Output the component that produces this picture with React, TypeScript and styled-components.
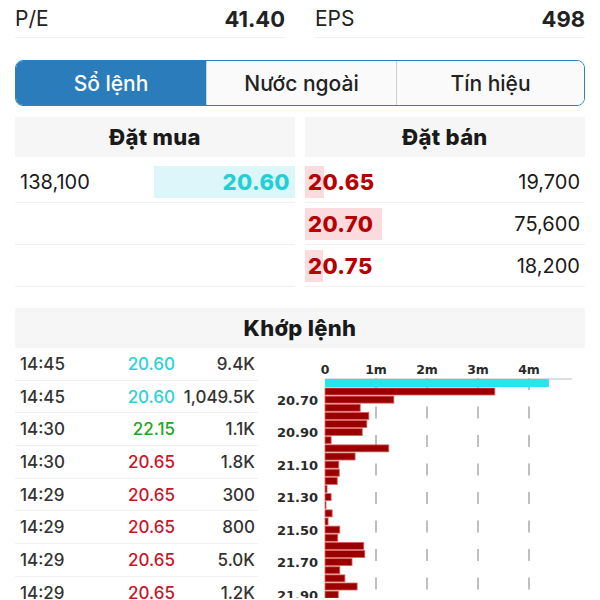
import styled, { createGlobalStyle } from 'styled-components';

const GlobalStyle = createGlobalStyle`
  html, body {
    margin: 0;
    padding: 0;
    background: #ffffff;
    overflow: hidden;
  }
  body {
    font-family: Inter, 'Noto Sans', 'DejaVu Sans', sans-serif;
    color: #222;
  }
`;

const Page = styled.div`
  width: 570px;
  height: 600px;
  padding: 0 15px;
  overflow: hidden;
`;

const StatsRow = styled.div`
  display: grid;
  grid-template-columns: 1fr 1fr;
  column-gap: 30px;
`;

const StatCell = styled.div`
  display: flex;
  justify-content: space-between;
  align-items: center;
  height: 37px;
  border-bottom: 1px solid #f0f0f0;
`;

const StatLabel = styled.span`
  font-size: 21px;
  font-weight: 400;
  color: #222;
`;

const StatValue = styled.span`
  font-size: 22px;
  font-weight: 700;
  color: #222;
`;

const Tabs = styled.div`
  display: grid;
  grid-template-columns: 190px 190px 1fr;
  margin-top: 22px;
  height: 44px;
  border: 1.5px solid #2f7fbf;
  border-radius: 8px;
  overflow: hidden;
`;

const Tab = styled.div<{ $active?: boolean }>`
  display: flex;
  align-items: center;
  justify-content: center;
  font-size: 21px;
  font-weight: 500;
  color: ${(p) => (p.$active ? '#ffffff' : '#222')};
  background: ${(p) => (p.$active ? '#2a7cbb' : '#fafafa')};
  & + & {
    border-left: 1px solid ${(p) => (p.$active ? '#2a7cbb' : '#cfcfcf')};
  }
`;

const OrderBook = styled.div`
  display: grid;
  grid-template-columns: 1fr 1fr;
  column-gap: 10px;
  margin-top: 11px;
`;

const SectionHeader = styled.div`
  display: flex;
  align-items: center;
  justify-content: center;
  height: 40px;
  background: #f6f6f6;
  font-size: 22px;
  font-weight: 800;
  letter-spacing: 0.3px;
  color: #1a1a1a;
`;

const BookRows = styled.div`
  margin-top: 4px;
`;

const BookRow = styled.div<{ $side: 'buy' | 'sell' }>`
  display: flex;
  align-items: center;
  justify-content: space-between;
  height: 41px;
  border-bottom: 1px solid #f1f1f1;
  padding: ${(p) => (p.$side === 'buy' ? '0 5px 0 5px' : '0 5px 0 3px')};
  background-repeat: no-repeat;
  background-size: 100% 32px;
  background-position: center;
`;

const BookVolume = styled.span`
  font-size: 20px;
  font-weight: 400;
  color: #1a1a1a;
`;

const BookPrice = styled.span<{ $side: 'buy' | 'sell' }>`
  font-size: 22px;
  font-weight: 800;
  letter-spacing: 0.4px;
  color: ${(p) => (p.$side === 'buy' ? '#1fd0d6' : '#b70000')};
`;

const MatchSection = styled.div`
  margin-top: 21px;
`;

const MatchBody = styled.div`
  display: flex;
  align-items: flex-start;
`;

const TradeTable = styled.div`
  width: 243px;
  flex-shrink: 0;
`;

const TradeRow = styled.div`
  display: grid;
  grid-template-columns: 100px 55px 80px;
  align-items: center;
  height: 31.7px;
  padding-left: 5px;
  border-bottom: 1px solid #efefef;
  font-size: 17px;
  font-weight: 500;
`;

const TradeTime = styled.span`
  color: #333;
`;

const TradePrice = styled.span<{ $color: string }>`
  text-align: right;
  color: ${(p) => p.$color};
`;

const TradeVolume = styled.span`
  text-align: right;
  color: #333;
`;

const ChartBox = styled.div`
  flex: 1;
  height: 250px;
  overflow: hidden;
`;

const ChartSvg = styled.svg`
  display: block;
  font-family: 'DejaVu Sans', Verdana, sans-serif;
  font-weight: 700;
`;

const colors = {
  ref: '#2ad2d8',
  up: '#23a623',
  down: '#c8162a',
};

const asks = [
  { price: '20.65', volume: '19,700', bar: 19 },
  { price: '20.70', volume: '75,600', bar: 77 },
  { price: '20.75', volume: '18,200', bar: 18 },
];

const trades = [
  { time: '14:45', price: '20.60', color: colors.ref, volume: '9.4K' },
  { time: '14:45', price: '20.60', color: colors.ref, volume: '1,049.5K' },
  { time: '14:30', price: '22.15', color: colors.up, volume: '1.1K' },
  { time: '14:30', price: '20.65', color: colors.down, volume: '1.8K' },
  { time: '14:29', price: '20.65', color: colors.down, volume: '300' },
  { time: '14:29', price: '20.65', color: colors.down, volume: '800' },
  { time: '14:29', price: '20.65', color: colors.down, volume: '5.0K' },
  { time: '14:29', price: '20.65', color: colors.down, volume: '1.2K' },
];

// volume by price in thousands, from 20.65 upward in 0.05 steps
const priceVolumes = [
  3330, 1350, 690, 860, 820, 730, 120, 1250, 590, 270, 280, 240, 40, 120, 20, 140, 60, 290, 250, 760, 780, 530,
  290, 390, 630, 260, 300,
];

const ORIGIN_X = 67;
const PER_M = 51;
const AXIS_Y = 31;
const ROW_STEP = 8.125;
const FIRST_ROW_Y = 40;

const VolumeChart = (): JSX.Element => {
  const ticks = [0, 1, 2, 3, 4];
  return (
    <ChartSvg width={327} height={250} viewBox="0 0 327 250">
      {ticks.map((t) => (
        <text key={'tick_' + t} x={ORIGIN_X + t * PER_M} y={25.5} fontSize={12.5} fill="#2a2a2a" textAnchor="middle">
          {t === 0 ? '0' : `${t}m`}
        </text>
      ))}
      {ticks.slice(1).map((t) => (
        <line
          key={'grid_' + t}
          x1={ORIGIN_X + t * PER_M}
          x2={ORIGIN_X + t * PER_M}
          y1={30}
          y2={250}
          stroke="#ababab"
          strokeWidth={1.5}
          strokeDasharray="12 16.5"
        />
      ))}
      <line x1={ORIGIN_X} x2={314} y1={AXIS_Y} y2={AXIS_Y} stroke="#bdbdbd" strokeWidth={1} />
      <rect x={ORIGIN_X} y={AXIS_Y} width={4390 * (PER_M / 1000)} height={8} fill="#24e6ee" />
      {priceVolumes.map((v, i) => {
        const y = FIRST_ROW_Y + i * ROW_STEP;
        return (
          <rect
            key={'bar_' + i}
            x={ORIGIN_X}
            y={y}
            width={Math.max(1, (v / 1000) * PER_M)}
            height={7}
            fill="#990000"
            stroke="#e06060"
            strokeWidth={0.8}
          />
        );
      })}
      {priceVolumes.map((_, i) =>
        i % 4 === 1 ? (
          <text
            key={'label_' + i}
            x={60}
            y={FIRST_ROW_Y + i * ROW_STEP + 8.5}
            fontSize={13}
            fill="#2a2a2a"
            textAnchor="end"
          >
            {(20.65 + i * 0.05).toFixed(2)}
          </text>
        ) : null,
      )}
    </ChartSvg>
  );
};

const App = (): JSX.Element => {
  return (
    <Page>
      <GlobalStyle />
      <StatsRow>
        <StatCell>
          <StatLabel>P/E</StatLabel>
          <StatValue>41.40</StatValue>
        </StatCell>
        <StatCell>
          <StatLabel>EPS</StatLabel>
          <StatValue>498</StatValue>
        </StatCell>
      </StatsRow>

      <Tabs>
        <Tab $active>Sổ lệnh</Tab>
        <Tab>Nước ngoài</Tab>
        <Tab>Tín hiệu</Tab>
      </Tabs>

      <OrderBook>
        <div>
          <SectionHeader>Đặt mua</SectionHeader>
          <BookRows>
            <BookRow
              $side="buy"
              style={{ backgroundImage: 'linear-gradient(to left, #dcf6f9 141px, transparent 141px)' }}
            >
              <BookVolume>138,100</BookVolume>
              <BookPrice $side="buy">20.60</BookPrice>
            </BookRow>
            <BookRow $side="buy" />
            <BookRow $side="buy" />
          </BookRows>
        </div>
        <div>
          <SectionHeader>Đặt bán</SectionHeader>
          <BookRows>
            {asks.map((a) => (
              <BookRow
                key={'ask_' + a.price}
                $side="sell"
                style={{ backgroundImage: `linear-gradient(to right, #fbdbde ${a.bar}px, transparent ${a.bar}px)` }}
              >
                <BookPrice $side="sell">{a.price}</BookPrice>
                <BookVolume>{a.volume}</BookVolume>
              </BookRow>
            ))}
          </BookRows>
        </div>
      </OrderBook>

      <MatchSection>
        <SectionHeader>Khớp lệnh</SectionHeader>
        <MatchBody>
          <TradeTable>
            {trades.map((t, i) => (
              <TradeRow key={'trade_' + i}>
                <TradeTime>{t.time}</TradeTime>
                <TradePrice $color={t.color}>{t.price}</TradePrice>
                <TradeVolume>{t.volume}</TradeVolume>
              </TradeRow>
            ))}
          </TradeTable>
          <ChartBox>
            <VolumeChart />
          </ChartBox>
        </MatchBody>
      </MatchSection>
    </Page>
  );
};

export default App;
